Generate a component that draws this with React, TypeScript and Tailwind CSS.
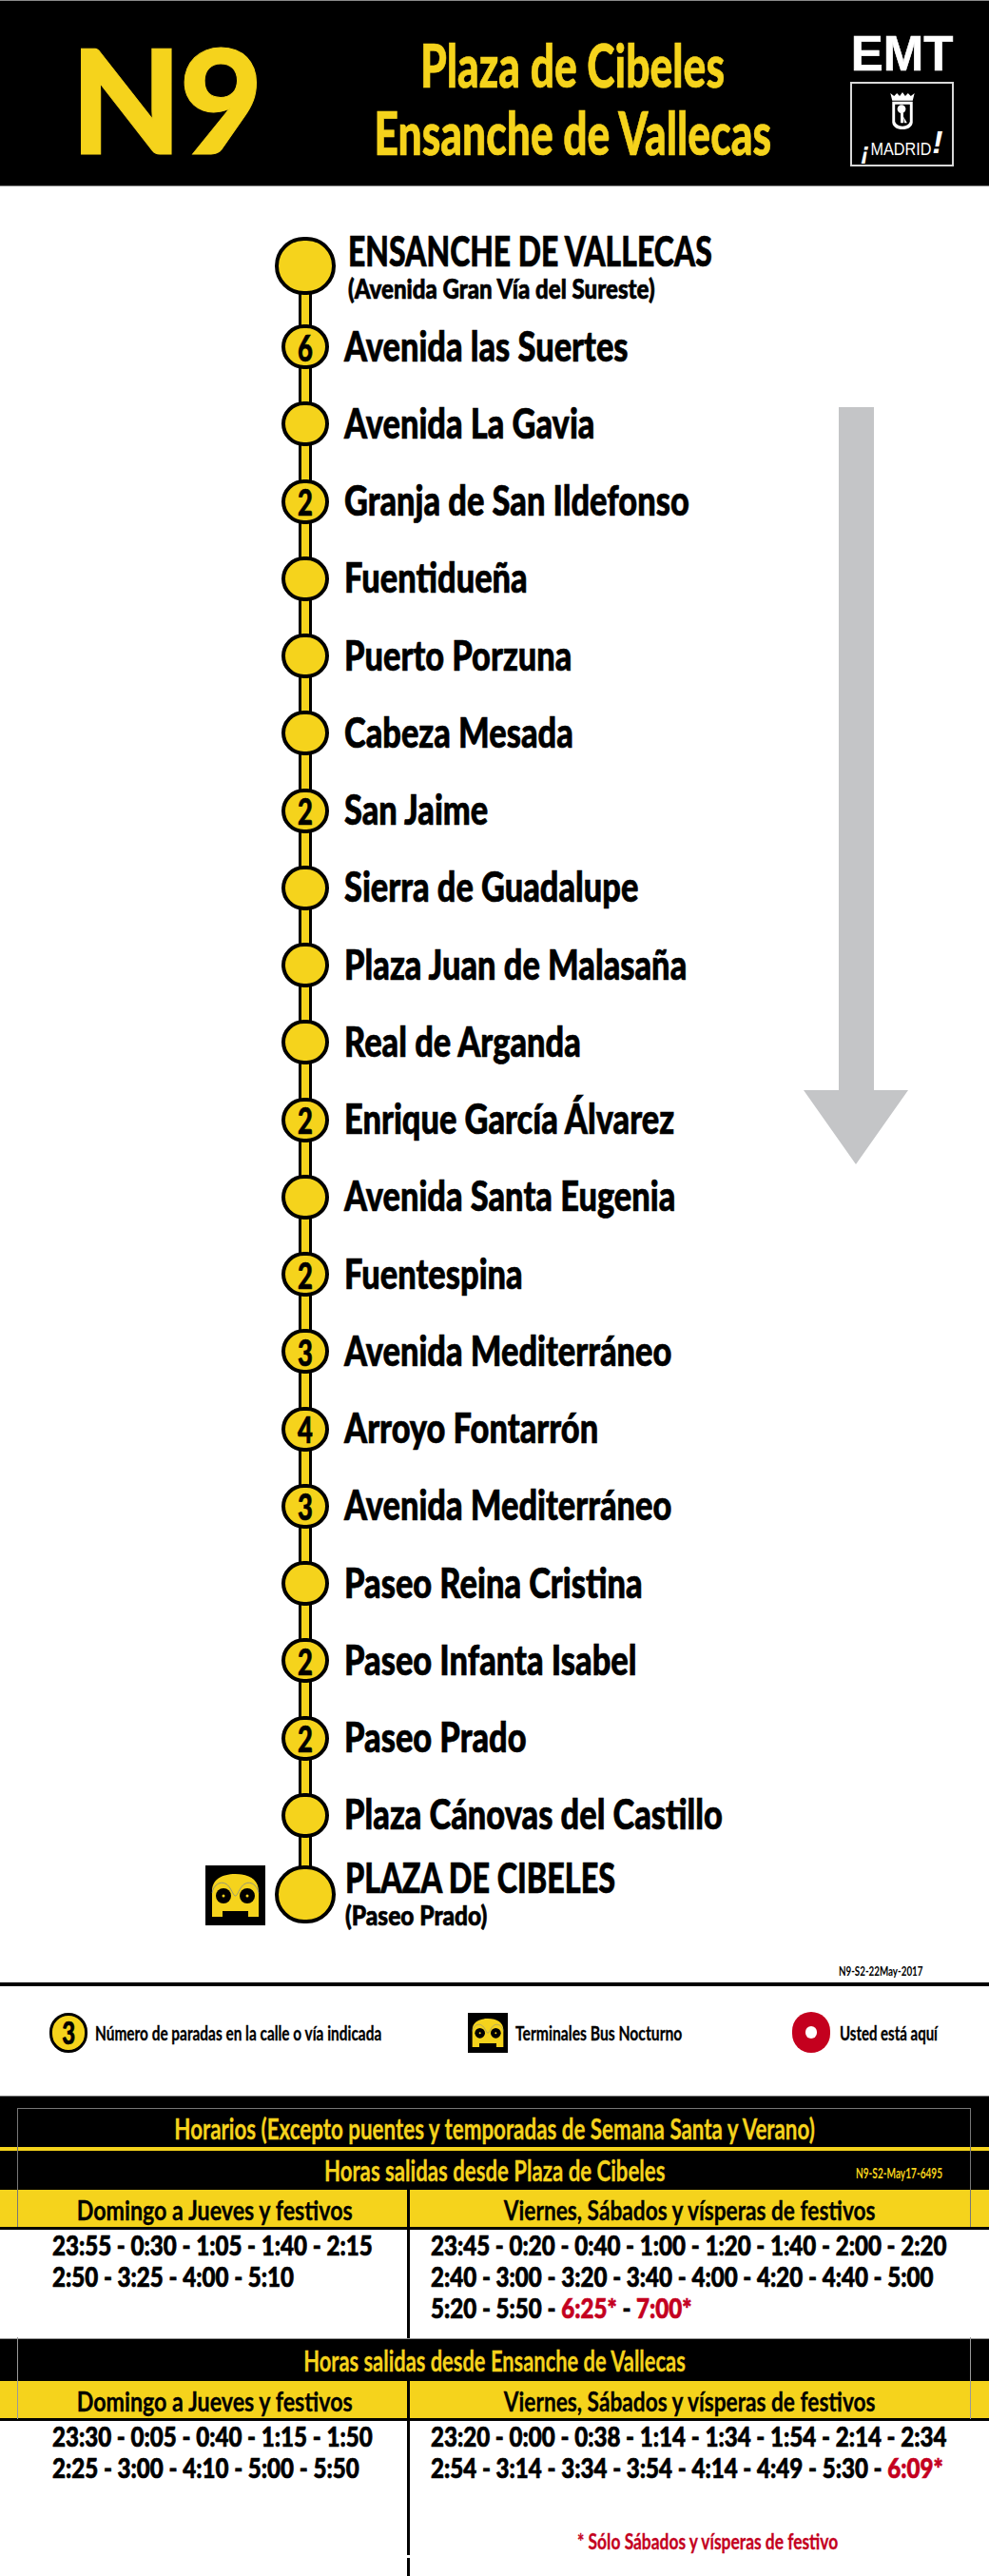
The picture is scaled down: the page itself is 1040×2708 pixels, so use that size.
import React from 'react';

const stops = [
    { name: 'Avenida las Suertes', count: '6' },
    { name: 'Avenida La Gavia', count: '' },
    { name: 'Granja de San Ildefonso', count: '2' },
    { name: 'Fuentidueña', count: '' },
    { name: 'Puerto Porzuna', count: '' },
    { name: 'Cabeza Mesada', count: '' },
    { name: 'San Jaime', count: '2' },
    { name: 'Sierra de Guadalupe', count: '' },
    { name: 'Plaza Juan de Malasaña', count: '' },
    { name: 'Real de Arganda', count: '' },
    { name: 'Enrique García Álvarez', count: '2' },
    { name: 'Avenida Santa Eugenia', count: '' },
    { name: 'Fuentespina', count: '2' },
    { name: 'Avenida Mediterráneo', count: '3' },
    { name: 'Arroyo Fontarrón', count: '4' },
    { name: 'Avenida Mediterráneo', count: '3' },
    { name: 'Paseo Reina Cristina', count: '' },
    { name: 'Paseo Infanta Isabel', count: '2' },
    { name: 'Paseo Prado', count: '2' },
    { name: 'Plaza Cánovas del Castillo', count: '' },
];

// Futura condensed stand-in: squeezed Lato with a thin stroke for the extra weight
const cond = 'inline-block whitespace-nowrap font-black [-webkit-text-stroke-width:0.7px]';
const thin = 'inline-block whitespace-nowrap font-bold [-webkit-text-stroke-width:0.3px]';

function BusIcon({ size }: { size: number }) {
    return (
        <svg width={size} height={size} viewBox="0 0 63 63" className="shrink-0">
            <rect width="63" height="63" fill="#000" />
            <path d="M7 54V27C7 15 17 9 31.500 9S56 15 56 27V54H45V48H18V54Z" fill="#f5d31c" />
            <path d="M7 29C9 18 20 14 26 24C29 29 30 32 31.500 32S34 29 37 24C43 14 54 18 56 29" fill="none" stroke="#6f7fa0" strokeWidth="0.7" />
            <circle cx="19" cy="32" r="8" fill="#000" />
            <circle cx="44" cy="32" r="8" fill="#000" />
            <circle cx="19" cy="32" r="1.500" fill="#f5d31c" />
            <circle cx="44" cy="32" r="1.500" fill="#f5d31c" />
        </svg>
    );
}

function MadridLogo() {
    return (
        <div className="w-[109px] h-[89px] border-2 border-[#d8d8d8] flex flex-col items-center pt-[9px] mt-[9px]">
            <svg width="28" height="41" viewBox="0 0 28 42" className="shrink-0">
                <path d="M1 1L5 4L8 1L11 4L14 0L17 4L20 1L23 4L27 1L25 9H3Z" fill="#fff" />
                <path d="M3 10H25V32C25 37 20 40 14 40S3 37 3 32Z" fill="#fff" />
                <path d="M6 13H22V31C22 34 18 36.500 14 36.500S6 34 6 31Z" fill="#000" />
                <circle cx="13" cy="18" r="4.500" fill="#fff" />
                <path d="M12 22H15V33H12ZM15 26L19 33H16Z" fill="#fff" />
            </svg>
            <div className="flex items-end h-[28px] text-white leading-none [font-family:'Liberation_Sans',sans-serif]">
                <span className="text-[26px] font-bold italic -mb-[6px]">¡</span>
                <span className="text-[18px] inline-block scale-x-[0.9] -mx-[2px]">MADRID</span>
                <span className="text-[34px] italic font-bold -ml-[1px]">!</span>
            </div>
        </div>
    );
}

function Stop({ name, count }: { name: string; count: string }) {
    return (
        <div className="flex items-center h-[81.26px] pl-[296px] gap-[16px]">
            <div className="w-[50px] h-[47px] rounded-full bg-[#f5d31c] border-[4px] border-black flex items-center justify-center shrink-0">
                {count && <span className={`${cond} scale-x-[0.72] text-[38px] leading-none text-black`}>{count}</span>}
            </div>
            <span className={`${cond} scale-x-[0.8] origin-left text-[43px] leading-none text-black pb-[3px]`}>{name}</span>
        </div>
    );
}

function DayHeads() {
    return (
        <div className="grid grid-cols-[431px_1fr] h-[42px] bg-[#f5d31c] border-b-[3px] border-black">
            <div className="flex items-center justify-center border-r-[3px] border-black pl-[24px]">
                <span className={`${thin} scale-x-[0.83] text-[28px] text-black`}>Domingo a Jueves y festivos</span>
            </div>
            <div className="flex items-center justify-center pr-[20px]">
                <span className={`${thin} scale-x-[0.81] text-[28px] text-black`}>Viernes, Sábados y vísperas de festivos</span>
            </div>
        </div>
    );
}

const timeRow = `${cond} scale-x-[0.86] origin-left text-[28px] leading-[33px] text-black block`;

export default function App() {
    return (
        <div className="w-[1040px] h-[2708px] bg-white overflow-hidden [font-family:Lato,sans-serif]">
            {/* Header */}
            <div className="h-[196px] bg-black border-y border-[#8a8a8a] flex items-center">
                <div className="w-[350px] pl-[74px] pt-[10px]">
                    <span className="inline-block text-[152px] leading-none font-black text-[#f5d31c] tracking-[-3px] [-webkit-text-stroke-width:1px]">N9</span>
                </div>
                <div className="w-[344px] flex flex-col items-center text-[#f5d31c] pt-[10px] ml-[80px]">
                    <span className={`${cond} scale-x-[0.705] text-[63px] leading-[71px]`}>Plaza de Cibeles</span>
                    <span className={`${cond} scale-x-[0.705] text-[63px] leading-[71px]`}>Ensanche de Vallecas</span>
                </div>
                <div className="ml-[120px] flex flex-col pt-[15px]">
                    <span className="text-[51px] leading-[40px] font-bold text-white [font-family:'Liberation_Sans',sans-serif] text-center [-webkit-text-stroke-width:0.6px]">EMT</span>
                    <MadridLogo />
                </div>
            </div>

            {/* Route */}
            <div className="h-[1888px] flex">
                <div className="relative w-[845px] pt-[53px]">
                    <div className="absolute left-[314px] top-[84px] h-[1710px] w-[14px] bg-[#f5d31c] border-x-[3px] border-black" />
                    <div className="relative flex h-[75px] pl-[289px] gap-[13px]">
                        <div className="w-[64px] h-[61px] rounded-full bg-[#f5d31c] border-[4px] border-black shrink-0" />
                        <div className="flex flex-col text-black -mt-[8px]">
                            <span className={`${cond} scale-x-[0.725] origin-left text-[44px] leading-[44px]`}>ENSANCHE DE VALLECAS</span>
                            <span className={`${cond} scale-x-[0.83] origin-left text-[29px] leading-[29px] mt-[3px]`}>(Avenida Gran Vía del Sureste)</span>
                        </div>
                    </div>
                    <div className="relative">
                        {stops.map((s, i) => (
                            <Stop key={i} name={s.name} count={s.count} />
                        ))}
                    </div>
                    <div className="relative flex pl-[216px] gap-[10px] mt-[12px]">
                        <BusIcon size={63} />
                        <div className="w-[64px] h-[61px] rounded-full bg-[#f5d31c] border-[4px] border-black shrink-0" />
                        <div className="flex flex-col text-black -mt-[10px]">
                            <span className={`${cond} scale-x-[0.735] origin-left text-[44px] leading-[44px]`}>PLAZA DE CIBELES</span>
                            <span className={`${cond} scale-x-[0.845] origin-left text-[29px] leading-[29px] mt-[3px]`}>(Paseo Prado)</span>
                        </div>
                    </div>
                </div>
                <div className="pt-[232px]">
                    <svg width="110" height="796" viewBox="0 0 110 796">
                        <path d="M37 0H74V718H110L55 796L0 718H37Z" fill="#c4c5c7" />
                    </svg>
                </div>
            </div>

            {/* Legend */}
            <div className="h-[119px] flex flex-col">
                <div className="flex justify-end pr-[70px] h-0">
                    <span className="text-[14px] leading-none -mt-[19px] whitespace-nowrap inline-block font-bold scale-x-[0.7] origin-right">N9-S2-22May-2017</span>
                </div>
                <div className="h-[4px] bg-black" />
                <div className="flex items-center h-[115px] pl-[52px] pb-[18px]">
                    <div className="w-[40px] h-[42px] rounded-full bg-[#f5d31c] border-[3px] border-black flex items-center justify-center shrink-0">
                        <span className={`${cond} scale-x-[0.75] text-[32px] leading-none`}>3</span>
                    </div>
                    <span className={`${thin} scale-x-[0.77] origin-left text-[20px] ml-[8px] w-[392px]`}>Número de paradas en la calle o vía indicada</span>
                    <BusIcon size={42} />
                    <span className={`${thin} scale-x-[0.785] origin-left text-[20px] ml-[8px] w-[291px]`}>Terminales Bus Nocturno</span>
                    <div className="w-[40px] h-[43px] rounded-full bg-[#c4001e] flex items-center justify-center shrink-0">
                        <div className="w-[12px] h-[13px] rounded-full bg-white" />
                    </div>
                    <span className={`${thin} scale-x-[0.75] origin-left text-[20px] ml-[10px]`}>Usted está aquí</span>
                </div>
            </div>

            {/* Timetable */}
            <div className="relative h-[504px]">
                <div className="h-[54px] bg-black border-t border-[#777] flex items-center justify-center pt-[14px]">
                    <span className={`${thin} scale-x-[0.745] text-[#f5d31c] text-[30px]`}>Horarios (Excepto puentes y temporadas de Semana Santa y Verano)</span>
                </div>
                <div className="h-[4px] bg-[#f5d31c]" />
                <div className="relative h-[41px] bg-black flex items-center justify-center">
                    <span className={`${thin} scale-x-[0.74] text-[#f5d31c] text-[30px]`}>Horas salidas desde Plaza de Cibeles</span>
                    <span className="absolute left-[900px] top-[11px] inline-block origin-left whitespace-nowrap font-bold scale-x-[0.63] text-[#f5d31c] text-[16px]">N9-S2-May17-6495</span>
                </div>
                <DayHeads />
                <div className="grid grid-cols-[431px_1fr] h-[114px]">
                    <div className="border-r-[3px] border-black pl-[55px]">
                        <span className={timeRow}>23:55 - 0:30 - 1:05 - 1:40 - 2:15</span>
                        <span className={timeRow}>2:50 - 3:25 - 4:00 - 5:10</span>
                    </div>
                    <div className="pl-[22px]">
                        <span className={timeRow}>23:45 - 0:20 - 0:40 - 1:00 - 1:20 - 1:40 - 2:00 - 2:20</span>
                        <span className={timeRow}>2:40 - 3:00 - 3:20 - 3:40 - 4:00 - 4:20 - 4:40 - 5:00</span>
                        <span className={timeRow}>
                            5:20 - 5:50 - <span className="text-[#c4001e]">6:25*</span> - <span className="text-[#c4001e]">7:00*</span>
                        </span>
                    </div>
                </div>
                <div className="h-[45px] bg-black flex items-center justify-center border-t border-[#999]">
                    <span className={`${thin} scale-x-[0.73] text-[#f5d31c] text-[30px]`}>Horas salidas desde Ensanche de Vallecas</span>
                </div>
                <DayHeads />
                <div className="grid grid-cols-[431px_1fr] h-[164px]">
                    <div className="border-r-[3px] border-black pl-[55px]">
                        <span className={timeRow}>23:30 - 0:05 - 0:40 - 1:15 - 1:50</span>
                        <span className={timeRow}>2:25 - 3:00 - 4:10 - 5:00 - 5:50</span>
                    </div>
                    <div className="pl-[22px]">
                        <span className={timeRow}>23:20 - 0:00 - 0:38 - 1:14 - 1:34 - 1:54 - 2:14 - 2:34</span>
                        <span className={timeRow}>
                            2:54 - 3:14 - 3:34 - 3:54 - 4:14 - 4:49 - 5:30 - <span className="text-[#c4001e]">6:09*</span>
                        </span>
                        <span className={`${thin} scale-x-[0.79] origin-left block text-[#c4001e] text-[22px] ml-[154px] mt-[44px]`}>* Sólo Sábados y vísperas de festivo</span>
                    </div>
                </div>

                {/* thin frame lines over the bands, and the break in the divider */}
                <div className="absolute left-[18px] top-[13px] w-[1003px] h-[125px] border border-[#777] border-b-0 pointer-events-none" />
                <div className="absolute left-[18px] top-[254px] w-[1003px] h-[86px] border-x border-[#999] pointer-events-none" />
                <div className="absolute left-[426px] top-[483px] w-[8px] h-[3px] bg-white" />
            </div>
        </div>
    );
}
